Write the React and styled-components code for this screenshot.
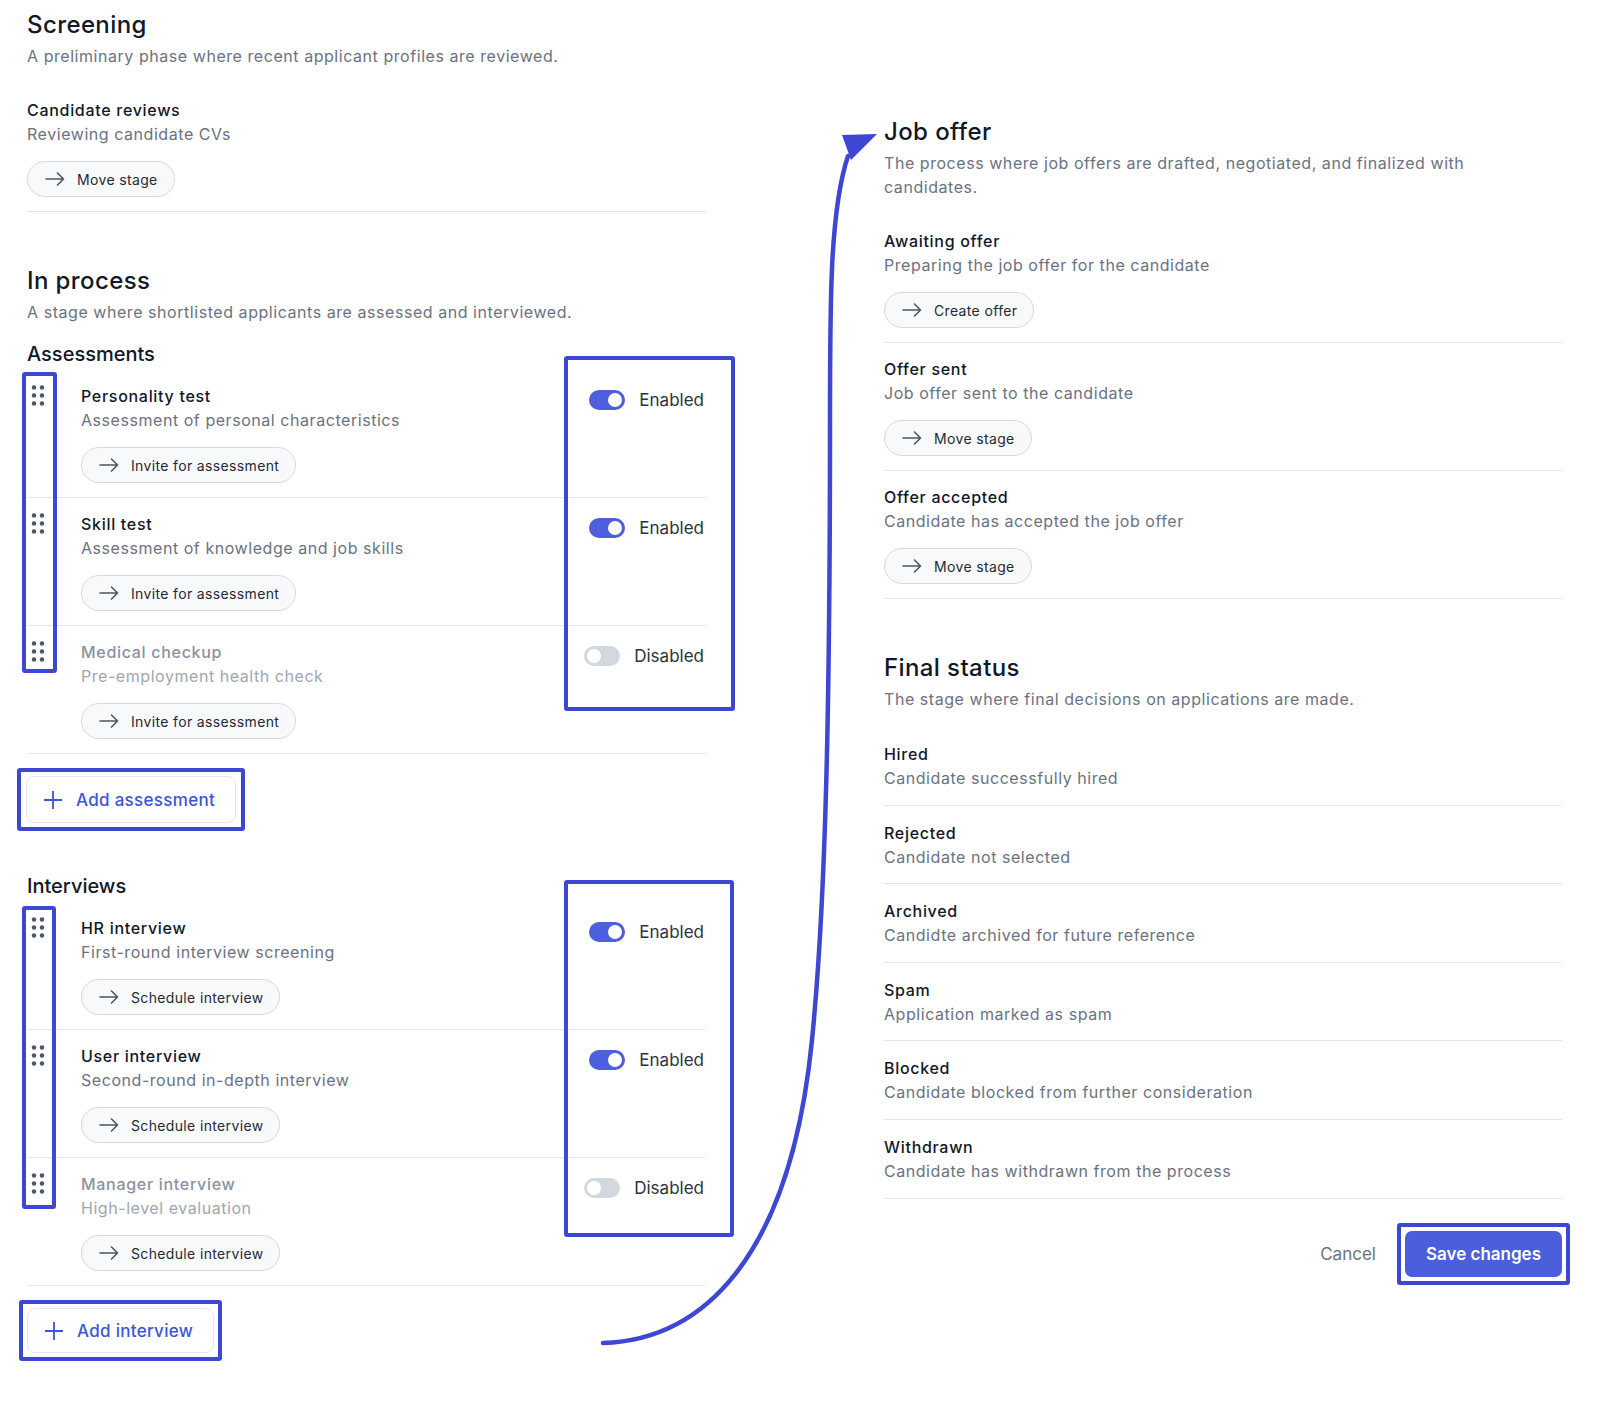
import styled, { createGlobalStyle } from "styled-components";

const GlobalStyle = createGlobalStyle`
  * { box-sizing: border-box; }
  body {
    margin: 0;
    background: #ffffff;
    font-family: Inter, "Noto Sans", sans-serif;
    color: #111827;
  }
`;

const MARK = "#3d47d1";

const Page = styled.div`
  position: relative;
  width: 1600px;
  min-height: 1407px;
  padding: 10px 0 0 27px;
  display: grid;
  grid-template-columns: 679px 678px;
  column-gap: 178px;
  align-items: start;
`;

const Column = styled.div`
  padding-top: ${(p) => p.$offset || 0}px;
`;

const Section = styled.section`
  & + & {
    margin-top: 54px;
  }
`;

const SectionTitle = styled.h2`
  margin: 0;
  font-size: 24px;
  line-height: 30px;
  font-weight: 500;
  letter-spacing: 0.4px;
  color: #111827;
`;

const SectionDesc = styled.p`
  margin: 4px 0 0;
  max-width: 600px;
  font-size: 16px;
  line-height: 24px;
  letter-spacing: 0.55px;
  color: #6b7280;
`;

const GroupTitle = styled.h3`
  margin: ${(p) => p.$top || 16}px 0 2px;
  font-size: 20px;
  line-height: 28px;
  font-weight: 500;
  color: #111827;
`;

const List = styled.div`
  position: relative;
  margin-top: ${(p) => (p.$tight ? 0 : 16)}px;
`;

const Row = styled.div`
  display: flex;
  align-items: flex-start;
  padding: ${(p) => (p.$plain ? "15px 0 14.6px" : "14px 0")};
  border-bottom: 1px solid #e2e5ea;
`;

const Handle = styled.div`
  flex: none;
  width: 54px;
  padding: 1px 0 0 4px;
  color: #4b5563;
  svg {
    display: block;
  }
`;

const Body = styled.div`
  flex: 1;
  min-width: 0;
`;

const ItemTitle = styled.div`
  font-size: 16px;
  line-height: 24px;
  font-weight: 500;
  letter-spacing: 0.7px;
  color: ${(p) => (p.$muted ? "#8a92a1" : "#111827")};
`;

const ItemDesc = styled.div`
  font-size: 16px;
  line-height: 24px;
  letter-spacing: 0.55px;
  color: ${(p) => (p.$muted ? "#a0a6b1" : "#6b7280")};
`;

const Action = styled.button`
  display: inline-flex;
  align-items: center;
  gap: 12px;
  height: 36px;
  margin-top: 15px;
  padding: 0 16px 0 17px;
  border: 1px solid #d5d9df;
  border-radius: 18px;
  background: #f8f9fb;
  font-family: inherit;
  font-size: 14px;
  letter-spacing: 0.35px;
  color: #1f2937;
  cursor: pointer;
  svg {
    color: #4b5563;
  }
`;

const Side = styled.div`
  flex: none;
  display: flex;
  align-items: center;
  gap: 14px;
  padding: 4px 2px 0 0;
`;

const Switch = styled.span`
  position: relative;
  display: block;
  width: 36px;
  height: 20px;
  border-radius: 10px;
  background: ${(p) => (p.$on ? "#4d5fdd" : "#d3d8df")};
  &::after {
    content: "";
    position: absolute;
    top: 3px;
    left: ${(p) => (p.$on ? 19 : 3)}px;
    width: 14px;
    height: 14px;
    border-radius: 50%;
    background: #ffffff;
  }
`;

const SwitchLabel = styled.span`
  font-size: 17px;
  line-height: 24px;
  color: #2b3340;
`;

const Frame = styled.div`
  position: absolute;
  top: ${(p) => p.$top}px;
  left: ${(p) => p.$left}px;
  width: ${(p) => p.$w}px;
  height: ${(p) => p.$h}px;
  border: 4px solid ${MARK};
  border-radius: 3px;
  pointer-events: none;
`;

const Highlight = styled.div`
  display: inline-flex;
  padding: ${(p) => p.$pad || "4px"};
  margin: ${(p) => p.$margin || "0"};
  border: 4px solid ${MARK};
  border-radius: 3px;
`;

const AddButton = styled.button`
  display: inline-flex;
  align-items: center;
  gap: 13px;
  height: ${(p) => p.$h || 46}px;
  padding: 0 20px 0 16px;
  border: 1.5px solid #e3e6ea;
  border-radius: 8px;
  background: #ffffff;
  font-family: inherit;
  font-size: 17px;
  font-weight: 500;
  letter-spacing: 0.3px;
  color: #3c55d8;
  cursor: pointer;
`;

const Footer = styled.div`
  display: flex;
  justify-content: flex-end;
  align-items: center;
  gap: 21px;
  margin: 24px -8px 0 0;
`;

const Cancel = styled.button`
  border: none;
  background: none;
  padding: 0;
  font-family: inherit;
  font-size: 17px;
  color: #6b7280;
  cursor: pointer;
`;

const Save = styled.button`
  height: 46px;
  padding: 0 21px;
  border: none;
  border-radius: 7px;
  background: #4b5fdc;
  color: #ffffff;
  font-family: inherit;
  font-size: 17px;
  font-weight: 600;
  cursor: pointer;
`;

const Overlay = styled.svg`
  position: absolute;
  top: 0;
  left: 0;
  pointer-events: none;
`;

function Arrow() {
  return (
    <svg width="20" height="14" viewBox="0 0 20 14" fill="none">
      <path
        d="M1 7H18.5M12.5 1L18.5 7L12.5 13"
        stroke="currentColor"
        strokeWidth="1.6"
        strokeLinecap="round"
        strokeLinejoin="round"
      />
    </svg>
  );
}

function Plus() {
  return (
    <svg width="20" height="20" viewBox="0 0 20 20" fill="none">
      <path d="M10 1V19M1 10H19" stroke="currentColor" strokeWidth="1.8" />
    </svg>
  );
}

function Grip() {
  return (
    <svg width="14" height="21" viewBox="0 0 14 21" fill="currentColor">
      {[2.5, 10.5, 18.5].map((y) =>
        [3, 11].map((x) => <circle key={`${x}-${y}`} cx={x} cy={y} r="2.2" />)
      )}
    </svg>
  );
}

function Item({ title, desc, action, muted, plain }) {
  return (
    <Row $plain={plain}>
      <Body>
        <ItemTitle $muted={muted}>{title}</ItemTitle>
        <ItemDesc $muted={muted}>{desc}</ItemDesc>
        {action && (
          <Action>
            <Arrow />
            {action}
          </Action>
        )}
      </Body>
    </Row>
  );
}

function DragItem({ title, desc, action, on }) {
  return (
    <Row>
      <Handle>
        <Grip />
      </Handle>
      <Body>
        <ItemTitle $muted={!on}>{title}</ItemTitle>
        <ItemDesc $muted={!on}>{desc}</ItemDesc>
        <Action>
          <Arrow />
          {action}
        </Action>
      </Body>
      <Side>
        <Switch $on={on} />
        <SwitchLabel>{on ? "Enabled" : "Disabled"}</SwitchLabel>
      </Side>
    </Row>
  );
}

const assessments = [
  { title: "Personality test", desc: "Assessment of personal characteristics", on: true },
  { title: "Skill test", desc: "Assessment of knowledge and job skills", on: true },
  { title: "Medical checkup", desc: "Pre-employment health check", on: false },
];

const interviews = [
  { title: "HR interview", desc: "First-round interview screening", on: true },
  { title: "User interview", desc: "Second-round in-depth interview", on: true },
  { title: "Manager interview", desc: "High-level evaluation", on: false },
];

const offers = [
  { title: "Awaiting offer", desc: "Preparing the job offer for the candidate", action: "Create offer" },
  { title: "Offer sent", desc: "Job offer sent to the candidate", action: "Move stage" },
  { title: "Offer accepted", desc: "Candidate has accepted the job offer", action: "Move stage" },
];

const finals = [
  { title: "Hired", desc: "Candidate successfully hired" },
  { title: "Rejected", desc: "Candidate not selected" },
  { title: "Archived", desc: "Candidte archived for future reference" },
  { title: "Spam", desc: "Application marked as spam" },
  { title: "Blocked", desc: "Candidate blocked from further consideration" },
  { title: "Withdrawn", desc: "Candidate has withdrawn from the process" },
];

export default function App() {
  return (
    <>
      <GlobalStyle />
      <Page>
        <Column>
          <Section>
            <SectionTitle>Screening</SectionTitle>
            <SectionDesc>A preliminary phase where recent applicant profiles are reviewed.</SectionDesc>
            <List>
              <Item title="Candidate reviews" desc="Reviewing candidate CVs" action="Move stage" />
            </List>
          </Section>

          <Section>
            <SectionTitle>In process</SectionTitle>
            <SectionDesc>A stage where shortlisted applicants are assessed and interviewed.</SectionDesc>

            <GroupTitle>Assessments</GroupTitle>
            <List $tight>
              {assessments.map((a) => (
                <DragItem key={a.title} {...a} action="Invite for assessment" />
              ))}
              <Frame $top={2} $left={-5} $w={35} $h={301} />
              <Frame $top={-14} $left={537} $w={171} $h={355} />
            </List>
            <Highlight $margin="14px 0 0 -10px" $pad="4px 5px">
              <AddButton $h={47}>
                <Plus />
                Add assessment
              </AddButton>
            </Highlight>

            <GroupTitle $top={41}>Interviews</GroupTitle>
            <List $tight>
              {interviews.map((a) => (
                <DragItem key={a.title} {...a} action="Schedule interview" />
              ))}
              <Frame $top={4} $left={-5} $w={34} $h={303} />
              <Frame $top={-22} $left={537} $w={170} $h={357} />
            </List>
            <Highlight $margin="14px 0 0 -8px">
              <AddButton $h={45}>
                <Plus />
                Add interview
              </AddButton>
            </Highlight>
          </Section>
        </Column>

        <Column $offset={107}>
          <Section>
            <SectionTitle>Job offer</SectionTitle>
            <SectionDesc>
              The process where job offers are drafted, negotiated, and finalized with candidates.
            </SectionDesc>
            <List>
              {offers.map((o) => (
                <Item key={o.title} {...o} />
              ))}
            </List>
          </Section>

          <Section>
            <SectionTitle>Final status</SectionTitle>
            <SectionDesc>The stage where final decisions on applications are made.</SectionDesc>
            <List>
              {finals.map((f) => (
                <Item key={f.title} {...f} plain />
              ))}
            </List>
            <Footer>
              <Cancel>Cancel</Cancel>
              <Highlight>
                <Save>Save changes</Save>
              </Highlight>
            </Footer>
          </Section>
        </Column>

        <Overlay width="1600" height="1407" viewBox="0 0 1600 1407">
          <path
            d="M603 1343 C700 1340 790 1262 812 1040 C826 900 830 700 830 420 C830 300 830 210 848 156"
            fill="none"
            stroke={MARK}
            strokeWidth="4.5"
            strokeLinecap="round"
          />
          <polygon points="842,135 877,134 851,160" fill={MARK} />
        </Overlay>
      </Page>
    </>
  );
}
